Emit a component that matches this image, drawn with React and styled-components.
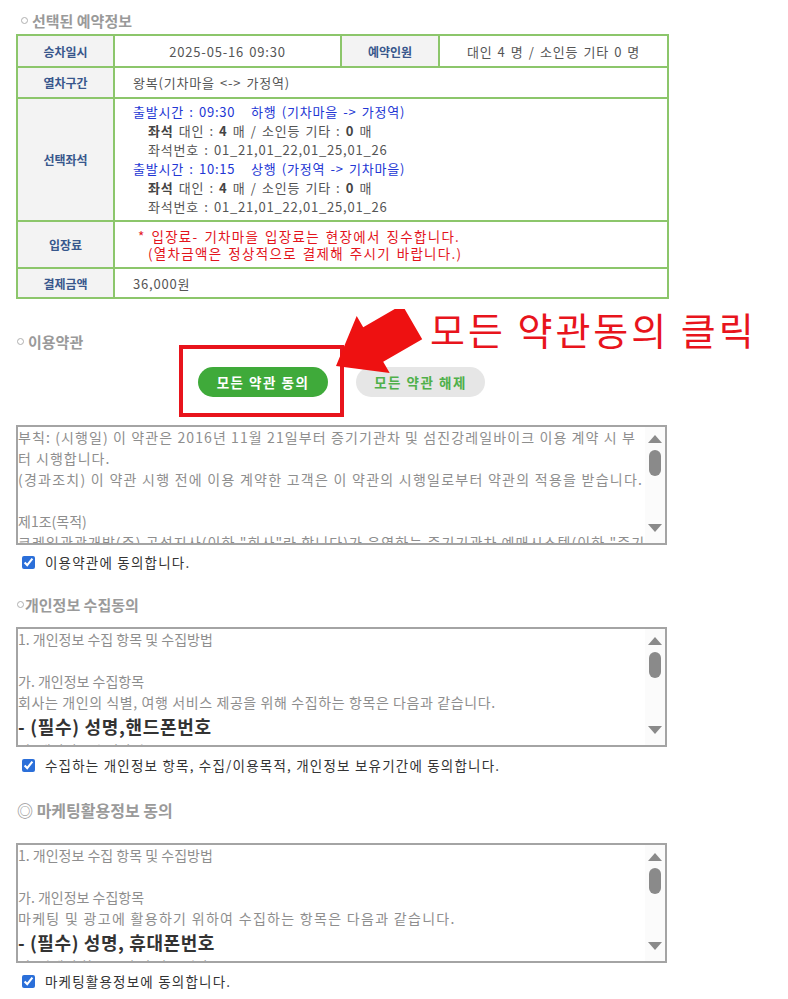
import React from 'react';
import styled, { createGlobalStyle } from 'styled-components';

const FONT = '"Noto Sans CJK KR", "Noto Sans", sans-serif';
const GREEN_LINE = '#8cc66b';

const Global = createGlobalStyle`
  html, body { margin: 0; padding: 0; background: #fff; }
  body { font-family: ${FONT}; color: #555; }
`;

const Page = styled.div`
  position: relative;
  width: 651px;
  padding: 0 0 10px 16px;
`;

const SectionTitle = styled.div`
  display: flex;
  align-items: center;
  gap: ${p => p.$gap ?? 4}px;
  margin-top: ${p => p.$mt}px;
  padding-left: ${p => p.$indent || 1}px;
  height: ${p => p.$h || 20}px;
  font-size: ${p => p.$size || 15}px;
  font-weight: 700;
  color: #9a9a9a;
`;

const Ring = styled.span`
  display: inline-block;
  width: 5px;
  height: 5px;
  border: 1.5px solid #b0b0b0;
  border-radius: 50%;
`;

const InfoTable = styled.table`
  margin-top: 4px;
  width: 651px;
  border-collapse: collapse;
  table-layout: fixed;
  border: 2px solid ${GREEN_LINE};
`;

const Row = styled.tr`
  height: ${p => p.$h}px;
`;

const Th = styled.th`
  background: #f3f3f3;
  color: #38578c;
  font-size: 12px;
  font-weight: 700;
  text-align: center;
  border: 2px solid ${GREEN_LINE};
  padding: 0;
`;

const Td = styled.td`
  border: 2px solid ${GREEN_LINE};
  font-size: 13px;
  letter-spacing: 0.8px;
  word-spacing: 1.5px;
  color: #555;
  text-align: ${p => (p.$center ? 'center' : 'left')};
  padding: ${p => (p.$center ? '0' : '0 0 0 18px')};
  vertical-align: middle;
`;

const Lines = styled.div`
  padding: 3px 0 4px;
  line-height: 19px;
`;

const Line = styled.div`
  color: ${p => p.$color || '#555'};
  padding-left: ${p => p.$indent || 0}px;
  white-space: pre;
`;

const Strong = styled.b`
  color: #444;
  font-weight: 700;
`;

const RedNote = styled.div`
  color: #e3141c;
  font-size: 13.5px;
  line-height: 17px;
  letter-spacing: 1.3px;
`;

const ButtonRow = styled.div`
  margin-top: 16px;
  display: flex;
  justify-content: center;
  gap: 28px;
`;

const ButtonWrap = styled.div`
  position: relative;
`;

const Pill = styled.button`
  width: ${p => p.$w}px;
  height: 30px;
  border: none;
  border-radius: 15px;
  background: ${p => (p.$primary ? '#3faa3a' : '#e6e6e6')};
  color: ${p => (p.$primary ? '#fff' : '#4fb04a')};
  font-family: ${FONT};
  font-size: 13.5px;
  font-weight: 700;
  letter-spacing: 1.5px;
  padding: 0;
  cursor: pointer;
`;

const Highlight = styled.div`
  position: absolute;
  top: -22px;
  left: -19px;
  width: 165px;
  height: 72px;
  box-sizing: border-box;
  border: 4px solid #e8141c;
  pointer-events: none;
`;

const Callout = styled.div`
  position: absolute;
  left: 430px;
  top: 297px;
  font-size: 38px;
  line-height: 44px;
  letter-spacing: 3px;
  color: #e8141c;
  font-weight: 400;
  white-space: nowrap;
`;

const ArrowSvg = styled.svg`
  position: absolute;
  left: 320px;
  top: 299px;
`;

const TermsBox = styled.div`
  margin-top: ${p => p.$mt}px;
  height: ${p => p.$h}px;
  box-sizing: border-box;
  border: 2px solid #a4a4a4;
  display: flex;
  background: #fff;
`;

const TermsText = styled.div`
  flex: 1;
  overflow: hidden;
  white-space: nowrap;
`;

const TermsLine = styled.div`
  height: ${p => (p.$big ? 27 : 21)}px;
  line-height: ${p => (p.$big ? 27 : 21)}px;
  font-size: ${p => (p.$big ? 18 : 14)}px;
  font-weight: ${p => (p.$big ? 700 : 400)};
  letter-spacing: ${p => p.$ls || 0}px;
  color: ${p => (p.$big ? '#333' : '#8e8e8e')};
`;

const Scrollbar = styled.div`
  width: 20px;
  background: #fbfbfb;
  display: flex;
  flex-direction: column;
  align-items: center;
  padding: 8px 0 11px;
`;

const Thumb = styled.div`
  margin-top: 7px;
  width: 12px;
  height: 26px;
  border-radius: 6px;
  background: #8a8a8a;
`;

const Spacer = styled.div`
  flex: 1;
`;

const CheckRow = styled.label`
  display: flex;
  align-items: center;
  gap: 10px;
  margin-top: ${p => p.$mt}px;
  height: 20px;
  padding-left: 6px;
  font-size: 13.5px;
  letter-spacing: 1.2px;
  color: #333;
`;

const Check = styled.input`
  margin: 0;
  width: 13px;
  height: 13px;
  accent-color: #2b6fd9;
`;

const Triangle = ({ down }) => (
  <svg width="14" height="8" viewBox="0 0 14 8">
    <polygon points={down ? '0,0 14,0 7,8' : '7,0 14,8 0,8'} fill="#8a8a8a" />
  </svg>
);

const Terms = ({ mt, h, lines }) => (
  <TermsBox $mt={mt} $h={h}>
    <TermsText>
      {lines.map((l, i) => (
        <TermsLine key={i} $big={l.big} $ls={l.ls}>
          {l.t || '\u00a0'}
        </TermsLine>
      ))}
    </TermsText>
    <Scrollbar>
      <Triangle />
      <Thumb />
      <Spacer />
      <Triangle down />
    </Scrollbar>
  </TermsBox>
);

const terms1 = [
  { t: '부칙: (시행일) 이 약관은 2016년 11월 21일부터 증기기관차 및 섬진강레일바이크 이용 계약 시 부', ls: 1.1 },
  { t: '터 시행합니다.', ls: 1 },
  { t: '(경과조치) 이 약관 시행 전에 이용 계약한 고객은 이 약관의 시행일로부터 약관의 적용을 받습니다.', ls: 1.25 },
  { t: '' },
  { t: '제1조(목적)' },
  { t: '코레일관광개발(주) 곡성지사(이하 "회사"라 합니다)가 운영하는 증기기관차 예매시스템(이하 "증기', ls: 1.1 },
];

const terms2 = [
  { t: '1. 개인정보 수집 항목 및 수집방법' },
  { t: '' },
  { t: '가. 개인정보 수집항목' },
  { t: '회사는 개인의 식별, 여행 서비스 제공을 위해 수집하는 항목은 다음과 같습니다.', ls: 0.6 },
  { t: '- (필수) 성명,핸드폰번호', big: true, ls: 0.7 },
  { t: '나. 개인정보 수집방법' },
];

const terms3 = [
  { t: '1. 개인정보 수집 항목 및 수집방법' },
  { t: '' },
  { t: '가. 개인정보 수집항목' },
  { t: '마케팅 및 광고에 활용하기 위하여 수집하는 항목은 다음과 같습니다.', ls: 1.3 },
  { t: '- (필수) 성명, 휴대폰번호', big: true, ls: 0.6 },
  { t: '나. 마케팅 활용 목적 및 이용 기간' },
];

export default function App() {
  return (
    <>
      <Global />
      <Page>
        <SectionTitle $mt={10} $indent={5}>
          <Ring />
          선택된 예약정보
        </SectionTitle>

        <InfoTable>
          <colgroup>
            <col style={{ width: 97 }} />
            <col style={{ width: 227 }} />
            <col style={{ width: 98 }} />
            <col style={{ width: 229 }} />
          </colgroup>
          <tbody>
            <Row $h={32}>
              <Th>승차일시</Th>
              <Td $center>2025-05-16 09:30</Td>
              <Th>예약인원</Th>
              <Td $center>대인 4 명 / 소인등 기타 0 명</Td>
            </Row>
            <Row $h={31}>
              <Th>열차구간</Th>
              <Td colSpan={3}>왕복(기차마을 &lt;-&gt; 가정역)</Td>
            </Row>
            <Row $h={123}>
              <Th>선택좌석</Th>
              <Td colSpan={3}>
                <Lines>
                  <Line $color="#2236d4">{'출발시간 : 09:30   하행 (기차마을 -> 가정역)'}</Line>
                  <Line $indent={15}>
                    <Strong>좌석</Strong> 대인 : <Strong>4</Strong> 매 / 소인등 기타 : <Strong>0</Strong> 매
                  </Line>
                  <Line $indent={15}>좌석번호 : 01_21,01_22,01_25,01_26</Line>
                  <Line $color="#2236d4">{'출발시간 : 10:15   상행 (가정역 -> 기차마을)'}</Line>
                  <Line $indent={15}>
                    <Strong>좌석</Strong> 대인 : <Strong>4</Strong> 매 / 소인등 기타 : <Strong>0</Strong> 매
                  </Line>
                  <Line $indent={15}>좌석번호 : 01_21,01_22,01_25,01_26</Line>
                </Lines>
              </Td>
            </Row>
            <Row $h={47}>
              <Th>입장료</Th>
              <Td colSpan={3}>
                <RedNote>
                  <Line $color="#e3141c" $indent={5}>* 입장료- 기차마을 입장료는 현장에서 징수합니다.</Line>
                  <Line $color="#e3141c" $indent={15}>(열차금액은 정상적으로 결제해 주시기 바랍니다.)</Line>
                </RedNote>
              </Td>
            </Row>
            <Row $h={30}>
              <Th>결제금액</Th>
              <Td colSpan={3}>36,000원</Td>
            </Row>
          </tbody>
        </InfoTable>

        <SectionTitle $mt={32} $indent={1}>
          <Ring />
          이용약관
        </SectionTitle>

        <ButtonRow>
          <ButtonWrap>
            <Pill $primary $w={130}>모든 약관 동의</Pill>
            <Highlight />
          </ButtonWrap>
          <ButtonWrap>
            <Pill $w={129}>모든 약관 해제</Pill>
          </ButtonWrap>
        </ButtonRow>

        <Terms mt={28} h={120} lines={terms1} />
        <CheckRow $mt={7}>
          <Check type="checkbox" defaultChecked />
          이용약관에 동의합니다.
        </CheckRow>

        <SectionTitle $mt={22} $indent={1} $gap={1}>
          <Ring />
          개인정보 수집동의
        </SectionTitle>
        <Terms mt={13} h={120} lines={terms2} />
        <CheckRow $mt={8}>
          <Check type="checkbox" defaultChecked />
          수집하는 개인정보 항목, 수집/이용목적, 개인정보 보유기간에 동의합니다.
        </CheckRow>

        <SectionTitle $mt={24} $indent={1} $h={22} $size={16} $gap={5}>
          ◎ 마케팅활용정보 동의
        </SectionTitle>
        <Terms mt={22} h={120} lines={terms3} />
        <CheckRow $mt={8}>
          <Check type="checkbox" defaultChecked />
          마케팅활용정보에 동의합니다.
        </CheckRow>

        <ArrowSvg width="130" height="72" viewBox="320 299 130 72">
          <polygon
            points="336,356 389.7,363.1 383.2,351.8 422.2,329.3 402.2,294.7 363.2,317.2 356.7,305.9"
            fill="#ee1111"
          />
        </ArrowSvg>
        <Callout>모든 약관동의 클릭</Callout>
      </Page>
    </>
  );
}
